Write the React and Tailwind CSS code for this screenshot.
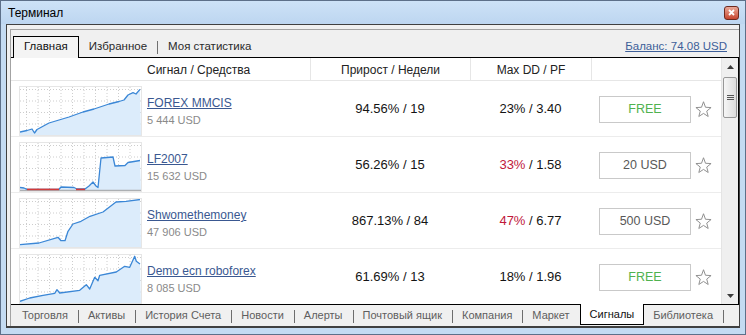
import React from "react";

const rows = [
  {
    name: "FOREX MMCIS",
    amount: "5 444 USD",
    growth: "94.56% / 19",
    dd: "23%",
    ddRed: false,
    pf: "3.40",
    price: "FREE",
    pts: [[1,46],[8,44.5],[13,43],[15.5,47],[18,43.5],[30,37],[40,34],[50,31],[64,26],[75,23],[90,18],[100,15.5],[105,14],[109,9],[114,6.7],[117,8],[121,3.3]],
  },
  {
    name: "LF2007",
    amount: "15 632 USD",
    growth: "56.26% / 15",
    dd: "33%",
    ddRed: true,
    pf: "1.58",
    price: "20 USD",
    pts: [[1,45.5],[5,46],[8,47.3],[40,47.3],[42,45],[55,45.5],[58,47],[66,47],[70,44],[74,40],[77,44],[79,45.5],[82,16],[94,15],[96,24],[106,23.5],[109,20.5],[115,19.5],[121,18.5]],
    reds: [[8,40],[57,66]],
  },
  {
    name: "Shwomethemoney",
    amount: "47 906 USD",
    growth: "867.13% / 84",
    dd: "47%",
    ddRed: true,
    pf: "6.77",
    price: "500 USD",
    pts: [[1,46.7],[20,45],[39,39.3],[42,42.7],[46,42.7],[49,33.3],[54,26],[62,23.3],[71,18.3],[84,14],[97,4],[107,3.3],[121,1.5]],
  },
  {
    name: "Demo ecn roboforex",
    amount: "8 085 USD",
    growth: "61.69% / 13",
    dd: "18%",
    ddRed: false,
    pf: "1.96",
    price: "FREE",
    pts: [[1,47.3],[10.7,44],[24,41.3],[35.7,39.3],[38,35.7],[40.7,39],[60.7,36.3],[67.3,30.7],[70.7,35],[75.7,23.3],[79,26.7],[80.7,21.3],[97.3,18],[105.7,12.3],[110.7,13.3],[115.7,2.3],[117.3,7.3],[121,10]],
  },
];

const topTabs = ["Главная", "Избранное", "Моя статистика"];
const bottomTabs = [
  "Торговля",
  "Активы",
  "История Счета",
  "Новости",
  "Алерты",
  "Почтовый ящик",
  "Компания",
  "Маркет",
  "Сигналы",
  "Библиотека",
];

const vLines = [7.5, 19, 30.5, 42, 53.5, 65, 76.5, 88, 99.5, 111];
const hLines = [3.5, 15, 26.5, 38];

function Chart({ pts, reds }) {
  const line = pts.map((p) => p.join(",")).join(" ");
  const area = `1,49 ${line} 122,49`;
  return (
    <div className="w-[123px] h-[50px] border border-[#e6e6e6] bg-white shrink-0">
      <svg width="121" height="48" viewBox="1 1 121 48" className="block">
        {vLines.map((x) => (
          <line key={x} x1={x} y1="1" x2={x} y2="49" stroke="#cdcdcd" strokeWidth="1" strokeDasharray="1 2" />
        ))}
        {hLines.map((y) => (
          <line key={y} x1="1" y1={y} x2="122" y2={y} stroke="#cdcdcd" strokeWidth="1" strokeDasharray="1 2" />
        ))}
        <polygon points={area} fill="#dcecfb" />
        {reds && <line x1="1" y1="48.3" x2="122" y2="48.3" stroke="#a0a0a0" strokeWidth="1" />}
        <polyline points={line} fill="none" stroke="#3b87d6" strokeWidth="1.3" strokeLinejoin="round" />
        {reds &&
          reds.map(([a, b]) => (
            <line key={a} x1={a} y1="47.4" x2={b} y2="47.4" stroke="#d23a3a" strokeWidth="1.6" />
          ))}
      </svg>
    </div>
  );
}

function Star() {
  return (
    <svg width="17" height="17" viewBox="0 0 16 16" className="block">
      <polygon
        points="8,0.7 9.88,5.91 15.13,6.18 11.04,9.49 12.41,14.57 8,11.7 3.59,14.57 4.96,9.49 0.87,6.18 6.12,5.91"
        fill="#fff"
        stroke="#8c8c8c"
        strokeWidth="0.9"
        strokeLinejoin="round"
      />
    </svg>
  );
}

function Row({ r }) {
  return (
    <div className="flex h-[56px] shrink-0 border-b border-[#ececec]">
      <div className="w-[299px] flex pl-[8px] pt-[5px]">
        <Chart pts={r.pts} reds={r.reds} />
        <div className="ml-[5px] pt-[9px] flex flex-col whitespace-nowrap">
          <span className="text-[12px] leading-[16px] text-[#3a5891] underline">{r.name}</span>
          <span className="text-[11px] leading-[16px] mt-[1px] text-[#8a8a8a]">{r.amount}</span>
        </div>
      </div>
      <div className="w-[160px] flex items-center justify-center text-[13px] text-[#141414] whitespace-nowrap">{r.growth}</div>
      <div className="w-[121px] flex items-center justify-center text-[13px] text-[#141414] whitespace-nowrap">
        <span className={r.ddRed ? "text-[#c0183a]" : ""}>{r.dd}</span>
        <span>&nbsp;/ {r.pf}</span>
      </div>
      <div className="flex-1 flex items-center pl-[8px] pt-px">
        <div
          className={
            "w-[92px] h-[27px] border border-[#c9c9c9] flex items-center justify-center text-[12.5px] " +
            (r.price === "FREE" ? "text-[#4fb24f]" : "text-[#585858]")
          }
        >
          {r.price}
        </div>
        <div className="ml-[4px]">
          <Star />
        </div>
      </div>
    </div>
  );
}

function Arrow({ up }) {
  return (
    <div className="h-[17px] flex items-center justify-center">
      <svg width="7" height="4" viewBox="0 0 7 4">
        <polygon points={up ? "0,4 7,4 3.5,0" : "0,0 7,0 3.5,4"} fill="#3c3c3c" />
      </svg>
    </div>
  );
}

export default function App() {
  return (
    <div className="w-[746px] h-[335px] border border-[#5d7089] bg-[#c4dbf2] flex flex-col font-['Liberation_Sans',Arial,sans-serif] overflow-hidden">
      {/* title bar */}
      <div className="h-[23px] shrink-0 flex items-center justify-between pl-[7px] pr-[6px] bg-linear-to-b from-[#cde2f7] to-[#bdd6f0]">
        <span className="text-[12px] text-black">Терминал</span>
        <div className="w-[15px] h-[14px] rounded-[3px] border border-[#6e2a1f] bg-linear-to-b from-[#e9a898] to-[#c6432d] flex items-center justify-center">
          <svg width="7" height="7" viewBox="0 0 7 7">
            <path d="M1 1 L6 6 M6 1 L1 6" stroke="#fff" strokeWidth="1.8" />
          </svg>
        </div>
      </div>

      {/* client area */}
      <div className="flex-1 mx-[5px] mb-[6px] border border-b-2 border-[#404040] bg-[#f0f0f0] pl-[3px] pt-[4px] flex flex-col min-h-0">
        <div className="flex-1 border-l border-t border-[#a3a3a3] flex flex-col min-h-0">
          {/* top tabs */}
          <div className="flex items-end pt-[6px] pl-[2px] pr-[12px] text-[11.5px] shrink-0 whitespace-nowrap">
            {topTabs.map((t, i) => (
              <React.Fragment key={t}>
                {i === 0 ? (
                  <div className="h-[22px] -mb-px relative z-10 px-[10px] border-l border-t border-r border-black bg-[#f4f4f4] flex items-center pb-px text-[#111]">
                    {t}
                  </div>
                ) : (
                  <>
                    {i > 1 && <div className="w-px h-[13px] bg-[#707070] self-center mb-[-1px]" />}
                    <div className="h-[21px] px-[10px] flex items-center text-[#2a2a2a]">{t}</div>
                  </>
                )}
              </React.Fragment>
            ))}
            <span className="ml-auto self-center mt-px text-[11.5px] text-[#3d5f99] underline">Баланс: 74.08 USD</span>
          </div>

          {/* content panel */}
          <div className="h-[248px] shrink-0 border-t border-r border-b border-black bg-white flex">
            <div className="flex-1 flex flex-col overflow-hidden">
              <div className="h-[23px] shrink-0 flex border-b border-[#e6e6e6] text-[12px] text-[#222] whitespace-nowrap">
                <div className="w-[299px] pl-[136px] flex items-center pt-px">Сигнал / Средства</div>
                <div className="w-[160px] border-l border-[#e6e6e6] flex items-center justify-center pt-px">Прирост / Недели</div>
                <div className="w-[121px] border-l border-[#e6e6e6] flex items-center justify-center pt-px">Max DD / PF</div>
                <div className="flex-1 border-l border-[#e6e6e6]" />
              </div>
              {rows.map((r) => (
                <Row key={r.name} r={r} />
              ))}
            </div>
            {/* scrollbar */}
            <div className="w-[17px] shrink-0 bg-[#efefef] border-l border-[#e4e4e4] flex flex-col">
              <Arrow up />
              <div className="mt-[2px] mx-px h-[41px] rounded-[2px] border border-[#979797] bg-linear-to-r from-[#f6f6f6] to-[#dcdcdc] flex flex-col items-center justify-center gap-[1px]">
                <div className="w-[7px] h-px bg-[#555]" />
                <div className="w-[7px] h-px bg-[#555]" />
                <div className="w-[7px] h-px bg-[#555]" />
              </div>
              <div className="flex-1" />
              <Arrow />
            </div>
          </div>

          {/* bottom tabs */}
          <div className="h-[21px] shrink-0 flex items-start pl-[2px] text-[11px] text-[#5e5e5e] whitespace-nowrap">
            {bottomTabs.map((t, i) => {
              const active = t === "Сигналы";
              const prevActive = bottomTabs[i - 1] === "Сигналы";
              return (
                <React.Fragment key={t}>
                  {i > 0 && !active && !prevActive && <div className="w-px h-[13px] shrink-0 bg-[#6d6d6d] mt-[5px]" />}
                  {active ? (
                    <div className="h-[21px] shrink-0 -mt-px px-[9px] border-l border-r border-b border-black bg-white text-[#111] flex items-center">
                      {t}
                    </div>
                  ) : (
                    <div className="h-[21px] shrink-0 pl-[9px] pr-[10px] flex items-center">{t}</div>
                  )}
                </React.Fragment>
              );
            })}
            <div className="w-px h-[13px] shrink-0 bg-[#6d6d6d] mt-[5px]" />
          </div>
        </div>
      </div>
    </div>
  );
}
